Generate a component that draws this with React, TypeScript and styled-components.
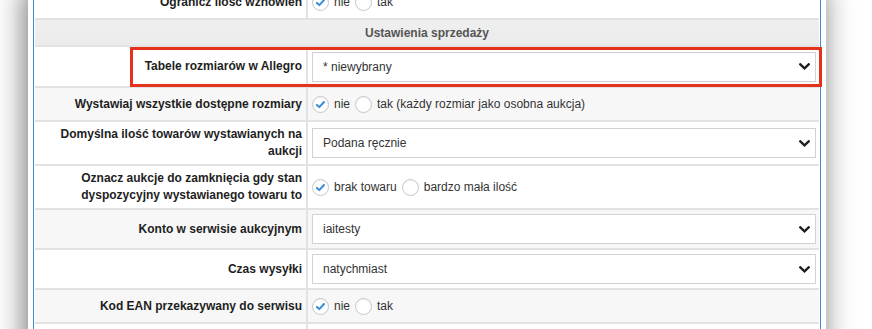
import React from "react";
import styled, { createGlobalStyle } from "styled-components";

const GlobalStyle = createGlobalStyle`
  html, body { margin: 0; padding: 0; background: #ffffff; }
  body { font-family: "Liberation Sans", Arial, sans-serif; overflow: hidden; }
  * { box-sizing: border-box; }
`;

const Viewport = styled.div`
  width: 872px;
  height: 329px;
  overflow: hidden;
  background: #ffffff;
`;

const Shell = styled.div`
  margin: -14px 0 0 28px;
  width: 798px;
  padding: 0 5px;
  background: #ffffff;
  box-shadow: -3px 0 28px rgba(0, 0, 0, 0.55);
`;

const Frame = styled.div`
  border-left: 1px solid #3f8ad8;
  border-right: 1px solid #3f8ad8;
  padding: 0 1px;
  background: #ffffff;
`;

const Table = styled.div`
  display: flex;
  flex-direction: column;
  width: 100%;
`;

const Row = styled.div<{ $shade?: boolean; $h: number }>`
  position: relative;
  display: flex;
  align-items: stretch;
  min-height: ${(p) => p.$h + 2}px;
  background: ${(p) => (p.$shade ? "#f7f7f7" : "#ffffff")};
  border-bottom: 2px solid #e2e2e2;
`;

const HeaderRow = styled.div`
  height: 27px;
  display: flex;
  align-items: center;
  justify-content: center;
  background: linear-gradient(to bottom, #efefef, #ebebeb);
  border-bottom: 2px solid #e2e2e2;
  font-size: 12px;
  font-weight: bold;
  color: #555555;
`;

const Label = styled.div`
  flex: 0 0 273px;
  width: 273px;
  display: flex;
  align-items: center;
  justify-content: flex-end;
  text-align: right;
  padding: 4px 4px 4px 10px;
  font-size: 12px;
  line-height: 17px;
  font-weight: bold;
  color: #1e1e1e;
  border-right: 2px solid #e2e2e2;
`;

const Value = styled.div`
  flex: 1;
  display: flex;
  align-items: center;
  padding: 4px 3px 4px 4px;
  font-size: 12px;
  color: #333333;
`;

const SelectBox = styled.div<{ $h: number }>`
  flex: 1;
  height: ${(p) => p.$h}px;
  display: flex;
  align-items: center;
  justify-content: space-between;
  padding: 0 5px 0 10px;
  border: 1px solid #d2d2d2;
  background: #ffffff;
  font-size: 12px;
  color: #333333;
`;

const RadioGroup = styled.div`
  display: flex;
  align-items: center;
`;

const RadioItem = styled.label`
  display: flex;
  align-items: center;
  gap: 5px;
  margin-right: 5px;
  font-size: 12px;
  color: #333333;
  white-space: nowrap;
`;

const RadioCircle = styled.span`
  width: 17px;
  height: 17px;
  border-radius: 50%;
  border: 1px solid #c6c6c6;
  background: #ffffff;
  box-shadow: inset 0 1px 1px rgba(0, 0, 0, 0.06);
  display: flex;
  align-items: center;
  justify-content: center;
  flex: 0 0 17px;
`;

const Highlight = styled.div`
  position: absolute;
  left: 95px;
  right: -3px;
  top: 0;
  height: 40px;
  border: 3px solid #e5321d;
  pointer-events: none;
`;

const Chevron = () => (
  <svg width="11" height="7" viewBox="0 0 11 7" aria-hidden="true">
    <polyline
      points="1.3,1.3 5.5,5.4 9.7,1.3"
      fill="none"
      stroke="#1e1e1e"
      strokeWidth="2.3"
      strokeLinecap="square"
    />
  </svg>
);

const Check = () => (
  <svg width="15" height="15" viewBox="0 0 15 15" aria-hidden="true">
    <path
      d="M3.9 7.9 L6.3 10.1 L11 5"
      fill="none"
      stroke="#3a8dd5"
      strokeWidth="2"
      strokeLinecap="round"
      strokeLinejoin="round"
    />
  </svg>
);

type RowDef =
  | { kind: "header"; text: string }
  | {
      kind: "radio";
      label: string;
      options: string[];
      checked: number;
      shade?: boolean;
      h: number;
    }
  | {
      kind: "select";
      label: string;
      value: string;
      shade?: boolean;
      highlight?: boolean;
      h: number;
      sh: number;
    };

const rows: RowDef[] = [
  { kind: "radio", label: "Ogranicz ilość wznowień", options: ["nie", "tak"], checked: 0, h: 32 },
  { kind: "header", text: "Ustawienia sprzedaży" },
  { kind: "select", label: "Tabele rozmiarów w Allegro", value: "* niewybrany", highlight: true, h: 39, sh: 30 },
  {
    kind: "radio",
    label: "Wystawiaj wszystkie dostępne rozmiary",
    options: ["nie", "tak (każdy rozmiar jako osobna aukcja)"],
    checked: 0,
    shade: true,
    h: 32,
  },
  { kind: "select", label: "Domyślna ilość towarów wystawianych na aukcji", value: "Podana ręcznie", h: 38, sh: 30 },
  {
    kind: "radio",
    label: "Oznacz aukcje do zamknięcia gdy stan dyspozycyjny wystawianego towaru to",
    options: ["brak towaru", "bardzo mała ilość"],
    checked: 0,
    h: 32,
  },
  { kind: "select", label: "Konto w serwisie aukcyjnym", value: "iaitesty", shade: true, h: 38, sh: 30 },
  { kind: "select", label: "Czas wysyłki", value: "natychmiast", h: 38, sh: 30 },
  { kind: "radio", label: "Kod EAN przekazywany do serwisu", options: ["nie", "tak"], checked: 0, shade: true, h: 32 },
];

export default function App() {
  return (
    <>
      <GlobalStyle />
      <Viewport>
        <Shell>
          <Frame>
            <Table>
              {rows.map((r, i) => {
                if (r.kind === "header") {
                  return <HeaderRow key={i}>{r.text}</HeaderRow>;
                }
                if (r.kind === "radio") {
                  return (
                    <Row key={i} $shade={r.shade} $h={r.h}>
                      <Label>{r.label}</Label>
                      <Value>
                        <RadioGroup>
                          {r.options.map((o, j) => (
                            <RadioItem key={j}>
                              <RadioCircle>{j === r.checked ? <Check /> : null}</RadioCircle>
                              {o}
                            </RadioItem>
                          ))}
                        </RadioGroup>
                      </Value>
                    </Row>
                  );
                }
                return (
                  <Row key={i} $shade={r.shade} $h={r.h}>
                    <Label>{r.label}</Label>
                    <Value>
                      <SelectBox $h={r.sh}>
                        <span>{r.value}</span>
                        <Chevron />
                      </SelectBox>
                    </Value>
                    {r.highlight ? <Highlight /> : null}
                  </Row>
                );
              })}
              <Row $h={40}>
                <Label />
                <Value />
              </Row>
            </Table>
          </Frame>
        </Shell>
      </Viewport>
    </>
  );
}
